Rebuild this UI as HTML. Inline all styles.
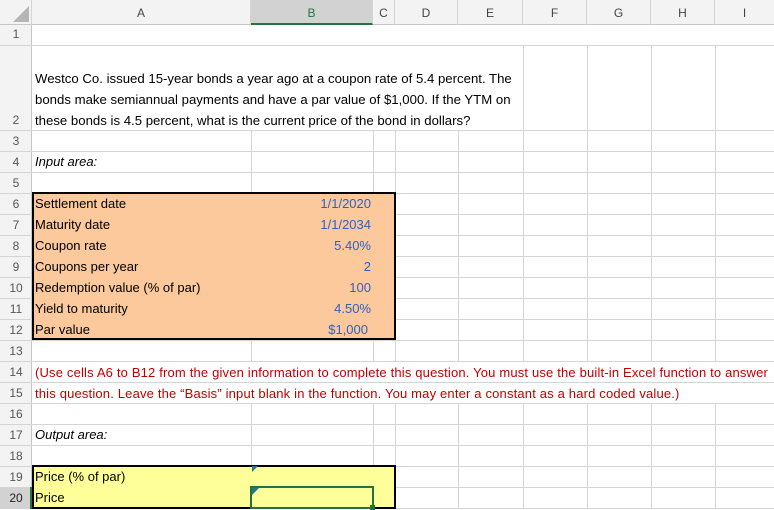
<!DOCTYPE html>
<html><head><meta charset="utf-8"><style>
*{margin:0;padding:0;box-sizing:border-box}
body{width:774px;height:509px;overflow:hidden;background:#fff;font-family:"Liberation Sans",Arial,sans-serif;font-size:13px;color:#000;position:relative}
.a{position:absolute}
.v{position:absolute;top:25px;width:1px;height:484px;background:#d4d4d4}
.h{position:absolute;left:0;width:774px;height:1px;background:#d4d4d4}
.ch{position:absolute;top:0;height:25px;line-height:27px;text-align:center;color:#444;font-size:12px;border-right:1px solid #d4d4d4}
.rh{position:absolute;left:0;width:32px;text-align:center;color:#555;font-size:12px}
.t{position:absolute;left:35px;white-space:nowrap;line-height:21px}
.r{position:absolute;right:403px;color:#2f5fc8;line-height:21px;text-align:right}
</style></head><body>
<div class="a" style="left:0;top:0;width:774px;height:25px;background:#f3f3f3;border-bottom:1px solid #c6c6c6"></div>
<div class="a" style="left:0;top:0;width:32px;height:25px;border-right:1px solid #d4d4d4"></div>
<svg class="a" style="left:12px;top:5px" width="18" height="18"><polygon points="17,1 17,17 1,17" fill="#b5b5b5"/></svg>
<div class="ch" style="left:32px;width:219px">A</div>
<div class="ch" style="left:251px;width:122px;background:#d2d2d2;color:#217346;border-bottom:2px solid #217346">B</div>
<div class="ch" style="left:373px;width:22px">C</div>
<div class="ch" style="left:395px;width:63px">D</div>
<div class="ch" style="left:458px;width:65px">E</div>
<div class="ch" style="left:523px;width:64px">F</div>
<div class="ch" style="left:587px;width:64px">G</div>
<div class="ch" style="left:651px;width:64px">H</div>
<div class="ch" style="left:715px;width:59px;border-right:none">I</div>
<div class="a" style="left:0;top:25px;width:32px;height:484px;background:#f3f3f3;border-right:1px solid #c6c6c6"></div>
<div class="v" style="left:251px"></div><div class="v" style="left:373px"></div><div class="v" style="left:395px"></div>
<div class="v" style="left:458px"></div><div class="v" style="left:523px"></div><div class="v" style="left:587px"></div>
<div class="v" style="left:651px"></div><div class="v" style="left:715px"></div>
<div class="a" style="left:33px;top:25px;width:741px;height:20px;background:#fff"></div>
<div class="a" style="left:33px;top:45px;width:490px;height:85px;background:#fff"></div>
<div class="a" style="left:33px;top:361px;width:741px;height:42px;background:#fff"></div>
<div class="h" style="top:45px"></div><div class="h" style="top:130px"></div>
<div class="h" style="top:151px"></div><div class="h" style="top:172px"></div><div class="h" style="top:193px"></div>
<div class="h" style="top:214px"></div><div class="h" style="top:235px"></div><div class="h" style="top:256px"></div>
<div class="h" style="top:277px"></div><div class="h" style="top:298px"></div><div class="h" style="top:319px"></div>
<div class="h" style="top:340px"></div><div class="h" style="top:361px"></div><div class="h" style="top:382px"></div>
<div class="h" style="top:403px"></div><div class="h" style="top:424px"></div><div class="h" style="top:445px"></div>
<div class="h" style="top:466px"></div><div class="h" style="top:487px"></div><div class="h" style="top:508px"></div>
<div class="rh" style="top:27px">1</div>
<div class="rh" style="top:113px">2</div>
<div class="rh" style="top:134px">3</div><div class="rh" style="top:155px">4</div><div class="rh" style="top:176px">5</div>
<div class="rh" style="top:197px">6</div><div class="rh" style="top:218px">7</div><div class="rh" style="top:239px">8</div>
<div class="rh" style="top:260px">9</div><div class="rh" style="top:281px">10</div><div class="rh" style="top:302px">11</div>
<div class="rh" style="top:323px">12</div><div class="rh" style="top:344px">13</div><div class="rh" style="top:365px">14</div>
<div class="rh" style="top:386px">15</div><div class="rh" style="top:407px">16</div><div class="rh" style="top:428px">17</div>
<div class="rh" style="top:449px">18</div><div class="rh" style="top:470px">19</div>
<div class="a" style="left:0;top:487px;width:32px;height:22px;background:#d2d2d2;border-right:2px solid #217346"></div>
<div class="rh" style="top:491px;color:#222">20</div>
<div class="t" style="top:68px;font-size:13.2px">Westco Co. issued 15-year bonds a year ago at a coupon rate of 5.4 percent. The</div>
<div class="t" style="top:89px;font-size:13.2px">bonds make semiannual payments and have a par value of $1,000. If the YTM on</div>
<div class="t" style="top:110px;font-size:13.2px">these bonds is 4.5 percent, what is the current price of the bond in dollars?</div>
<div class="t" style="top:151px;font-style:italic">Input area:</div>
<div class="a" style="left:32px;top:192px;width:364px;height:148px;background:#fbc99b;border:2px solid #000"></div>
<div class="t" style="top:193px">Settlement date</div><div class="r" style="top:193px">1/1/2020</div>
<div class="t" style="top:214px">Maturity date</div><div class="r" style="top:214px">1/1/2034</div>
<div class="t" style="top:235px">Coupon rate</div><div class="r" style="top:235px">5.40%</div>
<div class="t" style="top:256px">Coupons per year</div><div class="r" style="top:256px">2</div>
<div class="t" style="top:277px">Redemption value (% of par)</div><div class="r" style="top:277px">100</div>
<div class="t" style="top:298px">Yield to maturity</div><div class="r" style="top:298px">4.50%</div>
<div class="t" style="top:319px">Par value</div><div class="r" style="top:319px;right:406px">$1,000</div>
<div class="t" style="top:362px;color:#c00000;letter-spacing:0.17px">(Use cells A6 to B12 from the given information to complete this question. You must use the built-in Excel function to answer</div>
<div class="t" style="top:383px;color:#c00000;letter-spacing:0.17px">this question. Leave the “Basis” input blank in the function. You may enter a constant as a hard coded value.)</div>
<div class="t" style="top:424px;font-style:italic">Output area:</div>
<div class="a" style="left:32px;top:465px;width:364px;height:44px;background:#ffff99;border:2px solid #000"></div>
<div class="t" style="top:466px">Price (% of par)</div>
<div class="t" style="top:487px">Price</div>
<div class="a" style="left:250px;top:486px;width:124px;height:23px;border:2px solid #217346"></div>
<div class="a" style="left:370px;top:505px;width:5px;height:5px;background:#217346"></div>
<svg class="a" style="left:252px;top:466px" width="6" height="6"><polygon points="0,0 6,0 0,6" fill="#1e7a8a"/></svg>
<svg class="a" style="left:252px;top:488px" width="7" height="7"><polygon points="0,0 7,0 0,7" fill="#1e7a8a"/></svg>
</body></html>
